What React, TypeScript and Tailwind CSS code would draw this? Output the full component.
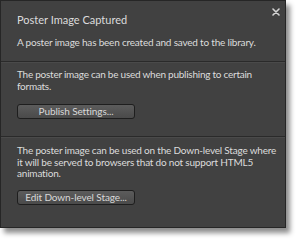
import React from "react";

export default function App() {
  const btn =
    "w-[118px] h-[15px] rounded-[3px] border border-[#1e1e1e] bg-gradient-to-b from-[#5c5c5c] to-[#4a4a4a] text-[10px] leading-[13px] text-center text-[#d8d8d8] tracking-[-0.1px]";
  return (
    <div className="w-[298px] h-[240px] bg-white relative" style={{ fontFamily: 'Lato, "Noto Sans", sans-serif' }}>
      <div className="w-[286px] h-[228px] bg-[#414141] border border-[#262626] shadow-[4px_5px_5px_rgba(0,0,0,0.45)] flex flex-col text-[#dcdcdc] relative">
        <svg className="absolute left-[271px] top-[7px]" width="8" height="8" viewBox="0 0 8 8">
          <path d="M1 1 L7 7 M7 1 L1 7" stroke="#d4d4d4" strokeWidth="1.6" strokeLinecap="round" />
        </svg>
        <div className="h-[61px] px-[16px] pt-[12px] border-b border-[#2a2a2a]">
          <div className="text-[11px] leading-[13px]">Poster Image Captured</div>
          <div className="text-[10px] leading-[12px] mt-[10px] whitespace-nowrap tracking-[-0.2px]">A poster image has been created and saved to the library.</div>
        </div>
        <div className="h-[75px] px-[16px] pt-[6px] border-t border-[#4a4a4a] border-b border-b-[#2a2a2a] text-[10px] leading-[11.5px] tracking-[-0.25px]">
          <div className="whitespace-nowrap">
            The poster image can be used when publishing to certain
            <br />
            formats.
          </div>
          <div className={"mt-[12px] " + btn}>Publish Settings...</div>
        </div>
        <div className="flex-1 px-[16px] pt-[7px] border-t border-[#4a4a4a] text-[10px] leading-[11.5px] tracking-[-0.2px]">
          <div className="whitespace-nowrap">
            The poster image can be used on the Down-level Stage where
            <br />
            it will be served to browsers that do not support HTML5
            <br />
            animation.
          </div>
          <div className={"mt-[10px] " + btn}>Edit Down-level Stage...</div>
        </div>
      </div>
    </div>
  );
}
